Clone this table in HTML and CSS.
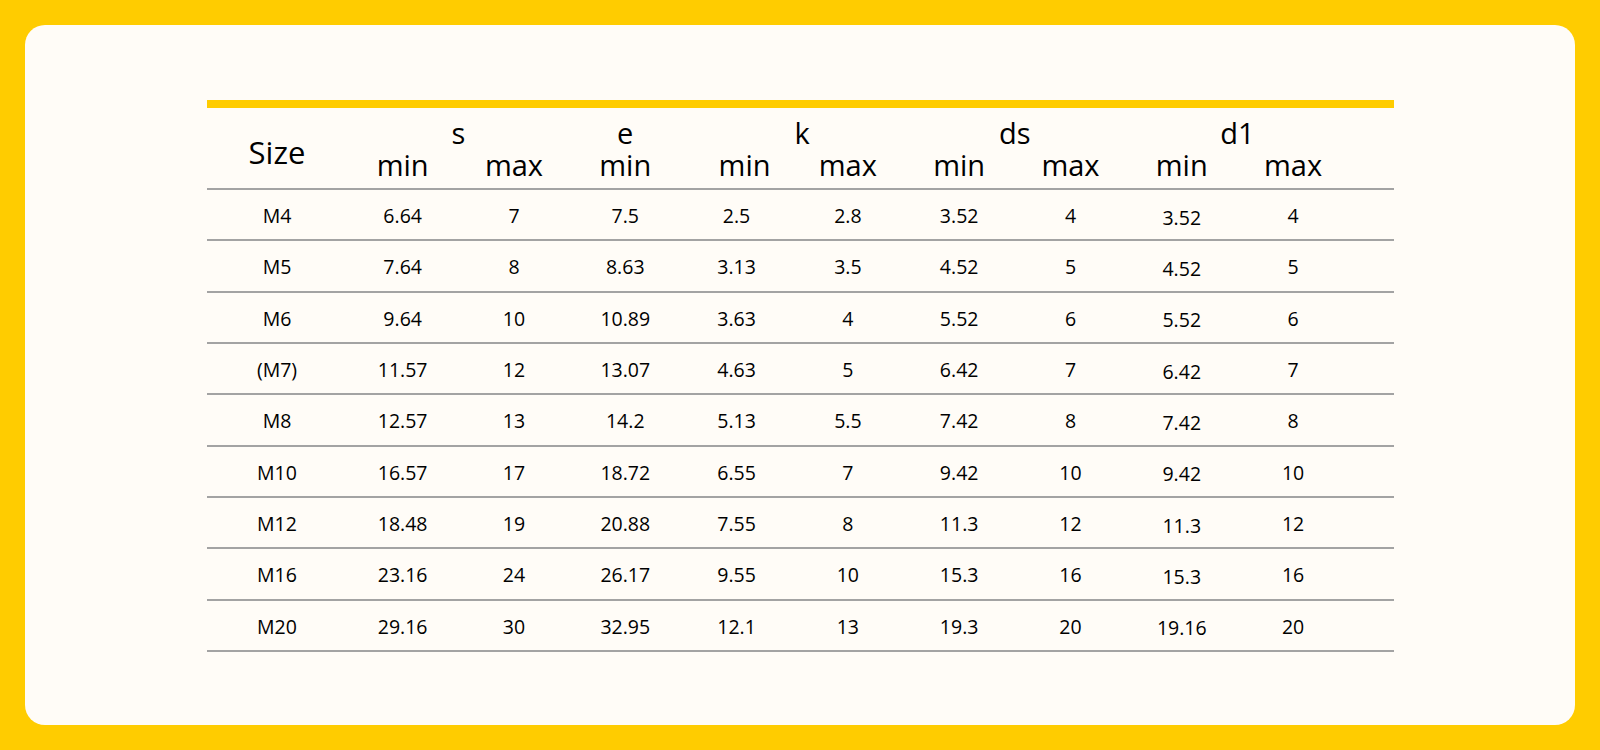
FILE: index.html
```html
<!DOCTYPE html>
<html lang="en">
<head>
<meta charset="utf-8">
<title>Size table</title>
<link rel="stylesheet" href="styles.css">
</head>
<body>
<div class="card">
  <div class="sheet">
    <div class="bar"></div>
    <table class="spec">
      <colgroup>
        <col class="c-size">
        <col class="c-val"><col class="c-val"><col class="c-val"><col class="c-val"><col class="c-val">
        <col class="c-val"><col class="c-val"><col class="c-val"><col class="c-val">
        <col class="c-fill">
      </colgroup>
      <thead>
        <tr class="grp-row">
          <th rowspan="2" class="size-head"><span class="size-lbl">Size</span></th>
          <th colspan="2"><span class="hl">s</span></th>
          <th><span class="hl">e</span></th>
          <th colspan="2" class="g-k"><span class="hl">k</span></th>
          <th colspan="2"><span class="hl">ds</span></th>
          <th colspan="2"><span class="hl">d1</span></th>
          <th></th>
        </tr>
        <tr class="sub-row">
          <th><span class="hl">min</span></th>
          <th><span class="hl">max</span></th>
          <th><span class="hl">min</span></th>
          <th class="k-min"><span class="hl">min</span></th>
          <th><span class="hl">max</span></th>
          <th><span class="hl">min</span></th>
          <th><span class="hl">max</span></th>
          <th><span class="hl">min</span></th>
          <th><span class="hl">max</span></th>
          <th></th>
        </tr>
      </thead>
      <tbody>
        <tr><td>M4</td><td>6.64</td><td>7</td><td>7.5</td><td>2.5</td><td>2.8</td><td>3.52</td><td>4</td><td class="low">3.52</td><td>4</td><td></td></tr>
        <tr><td>M5</td><td>7.64</td><td>8</td><td>8.63</td><td>3.13</td><td>3.5</td><td>4.52</td><td>5</td><td class="low">4.52</td><td>5</td><td></td></tr>
        <tr><td>M6</td><td>9.64</td><td>10</td><td>10.89</td><td>3.63</td><td>4</td><td>5.52</td><td>6</td><td class="low">5.52</td><td>6</td><td></td></tr>
        <tr><td>(M7)</td><td>11.57</td><td>12</td><td>13.07</td><td>4.63</td><td>5</td><td>6.42</td><td>7</td><td class="low">6.42</td><td>7</td><td></td></tr>
        <tr><td>M8</td><td>12.57</td><td>13</td><td>14.2</td><td>5.13</td><td>5.5</td><td>7.42</td><td>8</td><td class="low">7.42</td><td>8</td><td></td></tr>
        <tr><td>M10</td><td>16.57</td><td>17</td><td>18.72</td><td>6.55</td><td>7</td><td>9.42</td><td>10</td><td class="low">9.42</td><td>10</td><td></td></tr>
        <tr><td>M12</td><td>18.48</td><td>19</td><td>20.88</td><td>7.55</td><td>8</td><td>11.3</td><td>12</td><td class="low">11.3</td><td>12</td><td></td></tr>
        <tr><td>M16</td><td>23.16</td><td>24</td><td>26.17</td><td>9.55</td><td>10</td><td>15.3</td><td>16</td><td class="low">15.3</td><td>16</td><td></td></tr>
        <tr><td>M20</td><td>29.16</td><td>30</td><td>32.95</td><td>12.1</td><td>13</td><td>19.3</td><td>20</td><td class="low">19.16</td><td>20</td><td></td></tr>
      </tbody>
    </table>
  </div>
</div>
</body>
</html>
```

FILE: styles.css
```css
html, body {
  margin: 0;
  padding: 0;
}

body {
  background: #ffcc00;
  font-family: "Open Sans", "Noto Sans", sans-serif;
  color: #000;
  padding: 25px;
}

.card {
  background: #fffcf7;
  border-radius: 20px;
  height: 700px;
  box-sizing: border-box;
  padding: 75px 0 0 182px;
}

.sheet {
  width: 1187px;
}

.bar {
  height: 8px;
  background: #ffcc00;
}

.spec {
  width: 1187px;
  table-layout: fixed;
  border-collapse: separate;
  border-spacing: 0;
}

.c-size { width: 140px; }
.c-val { width: 111.3px; }
.c-fill { width: auto; }

.spec th {
  font-weight: normal;
  padding: 0;
  text-align: center;
}

.grp-row th {
  height: 40px;
  vertical-align: bottom;
}

.sub-row th {
  height: 40px;
  vertical-align: bottom;
  border-bottom: 2px solid #a3a3a3;
}

.spec th.size-head {
  vertical-align: top;
  border-bottom: 2px solid #a3a3a3;
  padding-top: 26px;
}

.hl {
  display: inline-block;
  font-size: 29px;
  line-height: 30px;
  position: relative;
}

.size-lbl {
  display: inline-block;
  font-size: 31px;
  line-height: 36px;
}

.grp-row .hl {
  top: 1px;
}

.sub-row .hl {
  top: -7px;
}

.spec th.g-k { padding-left: 20px; }
.spec th.k-min { padding-left: 16px; }

.spec td {
  height: 51.33px;
  padding: 2px 0 0;
  box-sizing: border-box;
  text-align: center;
  vertical-align: middle;
  font-size: 19.5px;
  border-bottom: 2px solid #a3a3a3;
}

.spec td.low {
  padding-top: 5px;
}
```
